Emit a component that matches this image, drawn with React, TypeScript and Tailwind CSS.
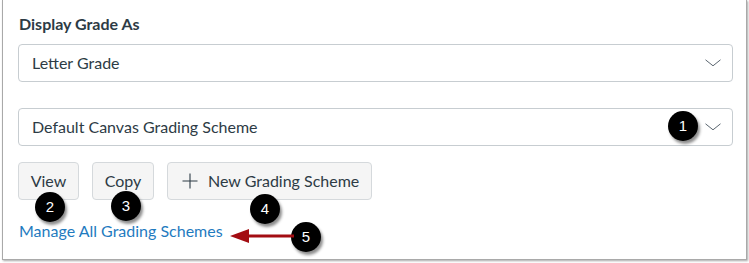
import React from "react";

function Chevron() {
  return (
    <svg width="16" height="8" viewBox="0 0 16 8" fill="none" className="shrink-0">
      <path d="M0.5 0.8 L8 6.8 L15.5 0.8" stroke="#5b6670" strokeWidth="1" />
    </svg>
  );
}

function Badge({ n, className }: { n: string; className: string }) {
  return (
    <div
      className={
        "absolute w-[30px] h-[30px] rounded-full bg-black text-white flex items-center justify-center text-[15px] shadow-[2px_3px_3px_rgba(0,0,0,0.45)] " +
        className
      }
      style={{ fontFamily: "Arial, 'Liberation Sans', sans-serif" }}
    >
      {n}
    </div>
  );
}

export default function App() {
  return (
    <div className="w-[749px] h-[263px] bg-white pl-[2px] pr-[2px] pb-[2px]" style={{ fontFamily: "Lato, 'Liberation Sans', sans-serif" }}>
      <div className="relative h-[260px] bg-white border-l border-r border-b border-[#a9a9a9] shadow-[1px_1px_2px_rgba(0,0,0,0.35)] pl-[15px] pr-[13px] text-[#2d3b45]">
        <div className="pt-[14px] h-[34px] text-[16px] font-bold leading-[20px] pl-[1px]">Display Grade As</div>
        <div className="mt-[10px] h-[38px] border border-[#c7cdd1] rounded-[4px] flex items-center justify-between pl-[13px] pr-[11px]">
          <span className="text-[16px]">Letter Grade</span>
          <Chevron />
        </div>
        <div className="mt-[26px] h-[38px] border border-[#c7cdd1] rounded-[4px] flex items-center justify-between pl-[13px] pr-[11px]">
          <span className="text-[16px]">Default Canvas Grading Scheme</span>
          <Chevron />
        </div>
        <div className="mt-[16px] flex gap-[13px]">
          <button className="h-[38px] w-[61px] bg-[#f5f5f5] border border-[#d5d9dc] rounded-[4px] text-[16px] text-[#2d3b45] flex items-center justify-center">View</button>
          <button className="h-[38px] w-[62px] bg-[#f5f5f5] border border-[#d5d9dc] rounded-[4px] text-[16px] text-[#2d3b45] flex items-center justify-center">Copy</button>
          <button className="h-[38px] w-[205px] bg-[#f5f5f5] border border-[#d5d9dc] rounded-[4px] text-[16px] text-[#2d3b45] flex items-center pl-[14px] gap-[10px]">
            <svg width="16" height="16" viewBox="0 0 16 16" fill="none">
              <path d="M8 0.5 V15.5 M0.5 8 H15.5" stroke="#2d3b45" strokeWidth="1.1" />
            </svg>
            <span>New Grading Scheme</span>
          </button>
        </div>
        <div className="mt-[21px] text-[16px] leading-[20px] text-[#1f7bbf] pl-[1px]">Manage All Grading Schemes</div>

        <Badge n="1" className="left-[665px] top-[111px]" />
        <Badge n="2" className="left-[32px] top-[192px]" />
        <Badge n="3" className="left-[108px] top-[191px]" />
        <Badge n="4" className="left-[247px] top-[194px]" />
        <Badge n="5" className="left-[288px] top-[222px]" />
        <svg className="absolute left-[225px] top-[228px]" width="66" height="16" viewBox="0 0 66 16">
          <polygon points="2,8 21,1 21,15" fill="#a30d12" />
          <rect x="20" y="6.5" width="46" height="3" fill="#a30d12" />
        </svg>
      </div>
    </div>
  );
}
